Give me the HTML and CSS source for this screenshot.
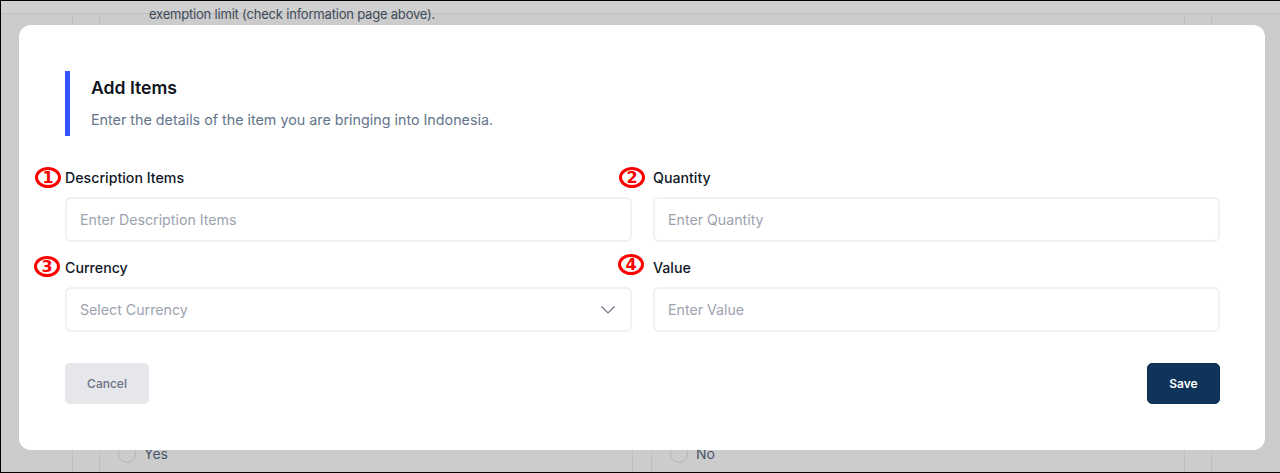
FILE: index.html
```html
<!DOCTYPE html>
<html lang="en">
<head>
    <meta charset="UTF-8">
    <meta name="viewport" content="width=device-width, initial-scale=1.0">
    <title>Add Items</title>
    <link rel="stylesheet" href="styles.css">
</head>
<body>
<div id="page">
    <div class="topbar"></div>
    <div class="sheet">
        <div class="inner">
            <p class="note">exemption limit (check information page above).</p>
            <div class="radios">
                <label class="radio"><i></i>Yes</label>
                <label class="radio"><i></i>No</label>
            </div>
        </div>
    </div>
</div>

<div id="modal">
    <div class="head">
        <h2>Add Items</h2>
        <p>Enter the details of the item you are bringing into Indonesia.</p>
    </div>
    <form class="fields">
        <div class="field">
            <span class="mark m1">1</span>
            <label>Description Items</label>
            <div class="input">Enter Description Items</div>
        </div>
        <div class="field">
            <span class="mark m2">2</span>
            <label>Quantity</label>
            <div class="input">Enter Quantity</div>
        </div>
        <div class="field">
            <span class="mark m3">3</span>
            <label>Currency</label>
            <div class="input">
                Select Currency
                <svg class="arrow" width="16" height="10" viewBox="0 0 16 10" fill="none" stroke="#6b7280" stroke-width="1.2"><path d="M1.5 1.5 8 8l6.5-6.5"/></svg>
            </div>
        </div>
        <div class="field">
            <span class="mark m4">4</span>
            <label>Value</label>
            <div class="input">Enter Value</div>
        </div>
    </form>
    <div class="btns">
        <button class="cancel" type="button">Cancel</button>
        <button class="save" type="button">Save</button>
    </div>
</div>
</body>
</html>
```

FILE: styles.css
```css
html, body {
    height: 100%;
}

body {
    margin: 0;
    font-family: Inter, "Noto Sans", sans-serif;
    background: #cccccc;
    overflow: hidden;
}

#page {
    display: flex;
    flex-direction: column;
    height: 473px;
    box-sizing: border-box;
    border-top: 1px solid #000;
    border-left: 1px solid #000;
    border-bottom: 1px solid #000;
}

.topbar {
    flex: none;
    height: 12px;
    background: #d0d0d0;
    border-bottom: 1px solid #bdbfc2;
}

.sheet {
    flex: 1;
    margin: 0 68px 0 71px;
    padding: 0 26px;
    border-left: 1px solid #bdbfc2;
    border-right: 1px solid #bdbfc2;
}

.inner {
    display: flex;
    flex-direction: column;
    justify-content: space-between;
    height: 100%;
    border-left: 1px solid #bdbfc2;
    border-right: 1px solid #bdbfc2;
}

.note {
    margin: -10px 0 0 49px;
    font-size: 13px;
    line-height: 20px;
    letter-spacing: -.2px;
    color: #3f4a57;
}

.radios {
    display: flex;
    gap: 18px;
    height: 28px;
}

.radio {
    flex: 1;
    display: flex;
    align-items: flex-start;
    gap: 8px;
    padding-left: 18px;
    font-size: 14px;
    line-height: 20px;
    color: #47566a;
}

.radio:first-child {
    border-right: 1px solid #bdbfc2;
}

.radio + .radio {
    border-left: 1px solid #bdbfc2;
}

.radio i {
    flex: none;
    width: 16px;
    height: 16px;
    margin-top: 1px;
    border: 1px solid #b5b7ba;
    border-radius: 50%;
}

#modal {
    position: absolute;
    left: 19px;
    top: 25px;
    width: 1246px;
    height: 425px;
    box-sizing: border-box;
    padding: 46px 45px 0 46px;
    background: #fff;
    border-radius: 12px;
}

.head {
    height: 65px;
    box-sizing: border-box;
    padding: 5px 0 0 21px;
    border-left: 5px solid #3355ff;
}

.head h2 {
    margin: 0;
    font-size: 17.6px;
    line-height: 24px;
    font-weight: 600;
    color: #0f1420;
}

.head p {
    margin: 8px 0 0;
    font-size: 14.3px;
    line-height: 24px;
    color: #64748b;
}

.fields {
    display: grid;
    grid-template-columns: 567px 567px;
    column-gap: 21px;
    row-gap: 15px;
    margin-top: 31px;
}

.field {
    position: relative;
}

.field label {
    display: block;
    height: 20px;
    margin-bottom: 10px;
    font-size: 14.2px;
    line-height: 21px;
    font-weight: 500;
    color: #111827;
}

.input {
    display: flex;
    align-items: center;
    justify-content: space-between;
    height: 45px;
    box-sizing: border-box;
    padding: 0 14px 0 13px;
    border: 2px solid #f0f1f4;
    border-radius: 6px;
    font-size: 14.2px;
    color: #9ca3af;
}

/* red numbers drawn on top of the screenshot */
.mark {
    position: absolute;
    width: 26px;
    height: 21px;
    box-sizing: border-box;
    border: 3px solid #ff0000;
    border-radius: 50%;
    font: bold 16px/15px "DejaVu Sans", sans-serif;
    color: #ff0000;
    text-align: center;
}

.m1 {
    left: -30px;
    top: 0;
}

.m2 {
    left: -34px;
    top: 0;
}

.m3 {
    left: -31px;
    top: -1px;
}

.m4 {
    left: -35px;
    top: -3px;
}

.btns {
    display: flex;
    justify-content: space-between;
    margin-top: 31px;
}

.btns button {
    height: 41px;
    border-radius: 5px;
    font-family: inherit;
    font-size: 12px;
}

.cancel {
    width: 84px;
    border: 0;
    background: #e5e7eb;
    color: #6b7280;
    font-weight: 500;
}

.save {
    width: 73px;
    border: 1px solid #0b2f52;
    background: #103359;
    color: #fff;
    font-weight: 600;
}
```
